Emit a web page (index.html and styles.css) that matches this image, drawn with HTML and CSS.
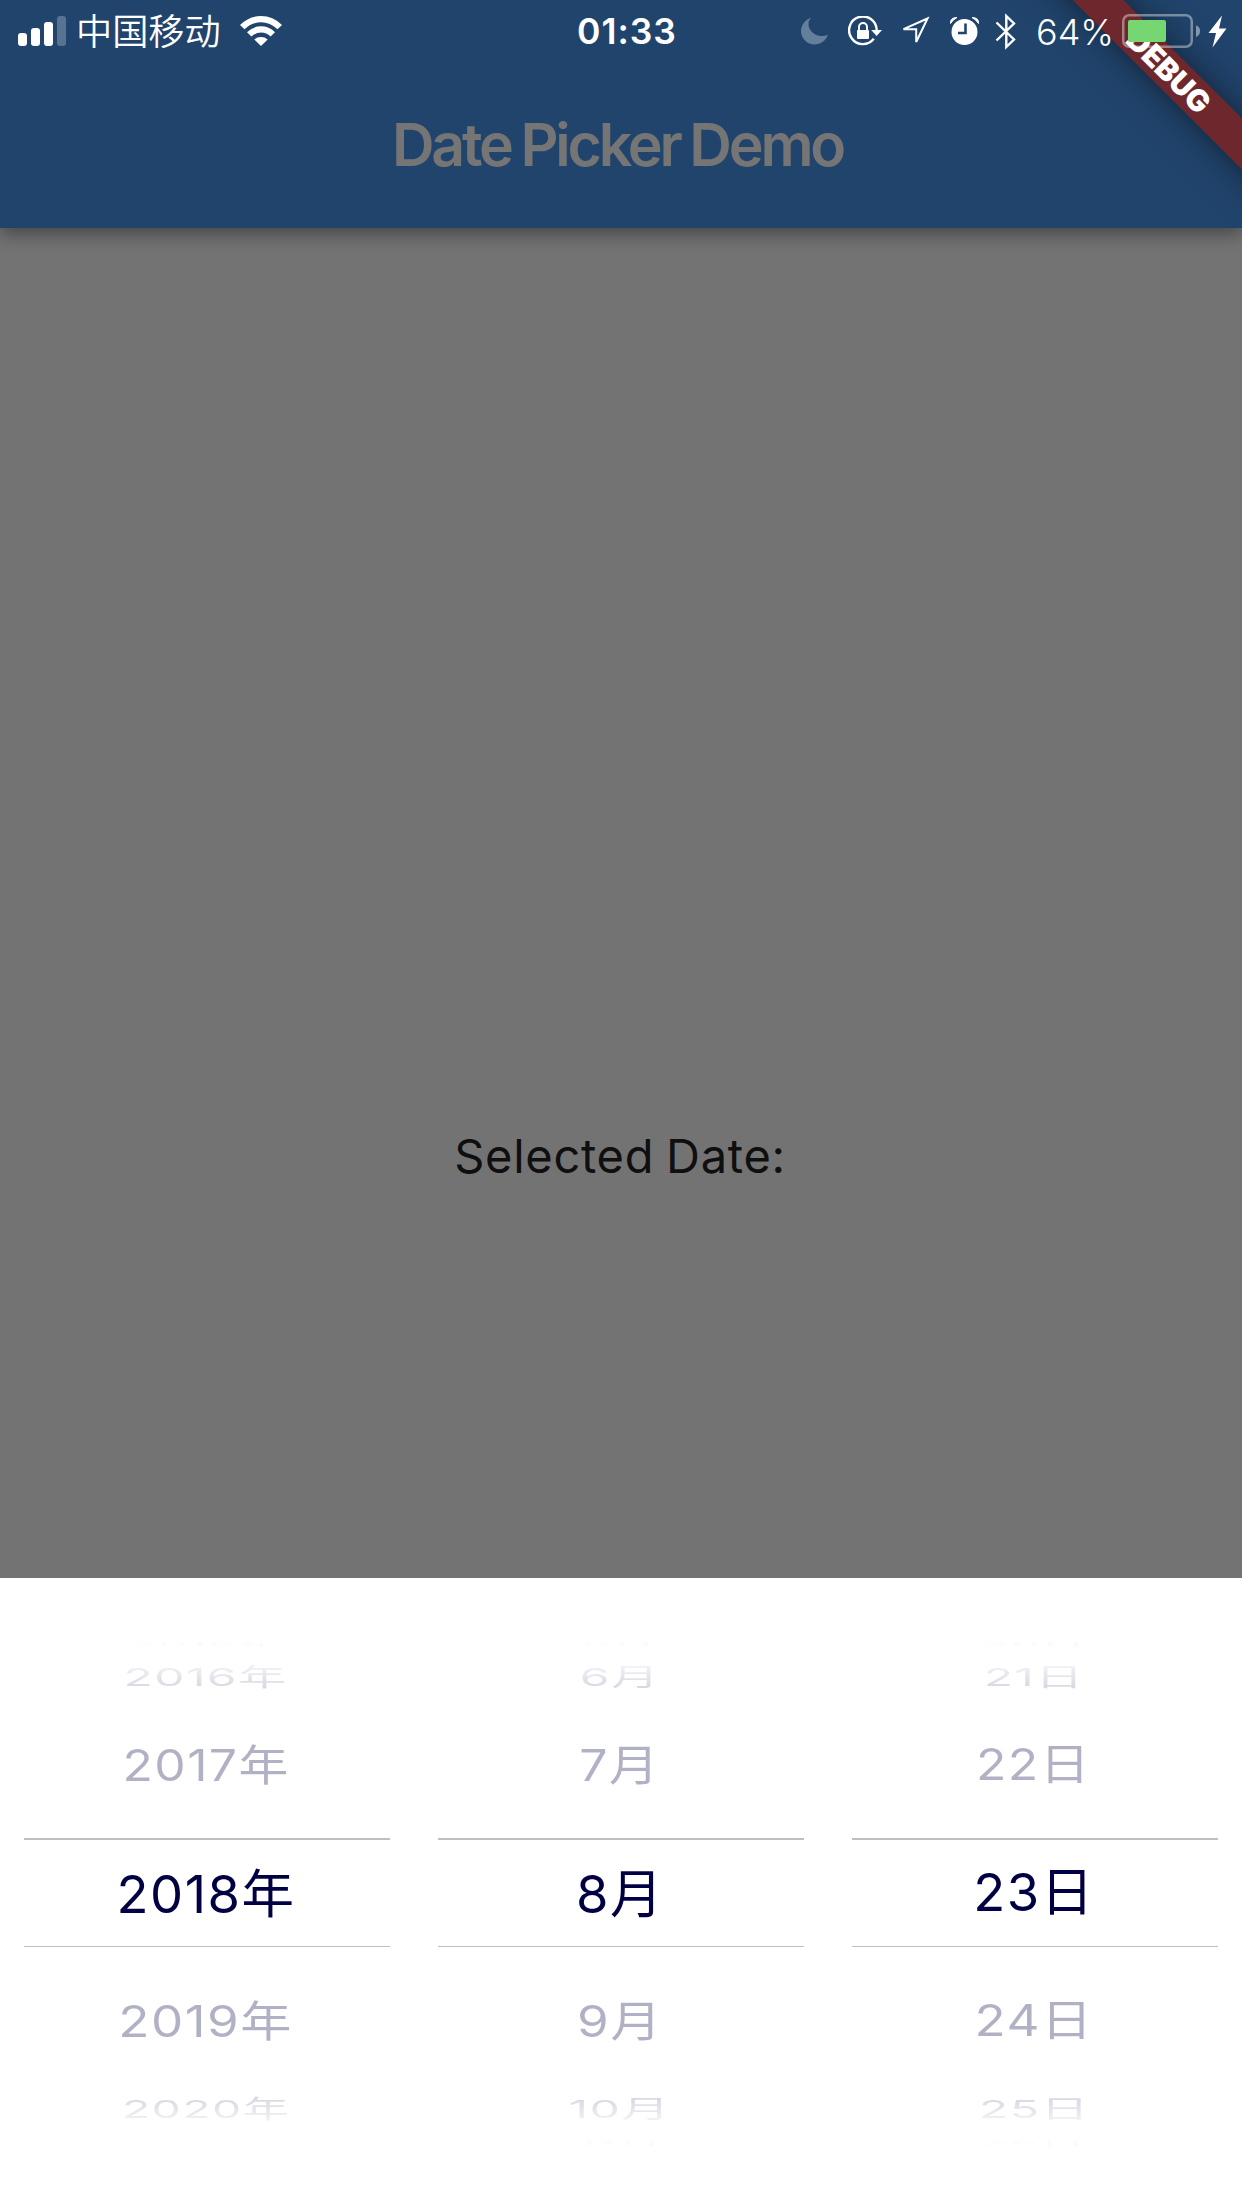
FILE: index.html
```html
<!DOCTYPE html>
<html lang="zh">
<head>
<meta charset="utf-8">
<title>Date Picker Demo</title>
<link rel="stylesheet" href="styles.css">
</head>
<body>
<div class="app">
  <header class="app-bar">
    <div class="status-bar">
      <div class="status-left">
        <svg class="signal" width="48" height="30" viewBox="0 0 48 30" fill="#fff">
          <rect x="0" y="17" width="9" height="13" rx="3"/>
          <rect x="13" y="12" width="9" height="18" rx="3"/>
          <rect x="26" y="6" width="9" height="24" rx="3"/>
          <rect x="39" y="0" width="9" height="30" rx="3" opacity=".25"/>
        </svg>
        <span class="carrier">中国移动</span>
        <svg width="42" height="30" viewBox="0 0 42 30" fill="#fff">
          <path d="M0 9Q9 0 21 0T42 9L37.5 13.3Q30 6.3 21 6.3T4.500 13.300Z"/>
          <path d="M7 16.200Q13 10.300 21 10.300T35 16.200L30.600 20.400Q26.500 16.500 21 16.500T11.400 20.400Z"/>
          <path d="M14.300 23.400Q17 21 21 21T27.700 23.400L21 30Z"/>
        </svg>
      </div>
      <span class="time">01:33</span>
      <div class="status-right">
        <svg class="moon" width="27" height="28" viewBox="0 0 27 28"><path d="M10.500 .5C4.500 2.500 0 8 0 14c0 7.500 6 13.500 13.500 13.500 6 0 11.500-4 13.500-9.800C24.500 18.800 22 19.300 19.500 19 12 18 7 12 7.500 6 7.800 3.500 8.800 2 10.500.5Z" fill="#647f9c"/></svg>
        <svg class="lock" width="34" height="30" viewBox="0 0 34 30" fill="none" stroke="#fff">
          <path d="M25.800 22.800A13.800 13.800 0 1 1 28.700 14" stroke-width="2.400"/>
          <path d="M23.200 14H34l-5.400 6Z" fill="#fff" stroke="none"/>
          <rect x="9" y="14" width="12" height="9" rx="1" fill="#fff" stroke="none"/>
          <path d="M11 15v-4a4 4 0 0 1 8 0v4" stroke-width="2"/>
        </svg>
        <svg class="arrow" width="30" height="31" viewBox="0 0 30 31" fill="none" stroke="#fff" stroke-width="2"><path d="M27.500 2.500L3.500 13.200H16.200V26Z"/></svg>
        <svg class="alarm" width="29" height="29" viewBox="0 0 29 29">
          <circle cx="14.500" cy="15" r="13" fill="#fff"/>
          <path d="M.5 6.500Q0 .5 7 .5Q3 2.500.5 6.500ZM28.500 6.500Q29 .5 22 .5Q26 2.500 28.500 6.500Z" fill="#fff" stroke="#fff"/>
          <path d="M15.500 6.500V16H8" fill="none" stroke="#21446c" stroke-width="2.600"/>
        </svg>
        <svg class="bluetooth" width="22" height="37" viewBox="0 0 22 37" fill="none" stroke="#fff" stroke-width="2.400"><path d="M1.500 9.500L19 26.500 11.300 34V3L19 10.500 1.500 27.500"/></svg>
        <span class="percent">64%</span>
        <svg class="battery" width="78" height="34" viewBox="0 0 78 34">
          <rect x="1.250" y="1.250" width="68.500" height="31.500" rx="6" fill="none" stroke="#fff" stroke-opacity=".4" stroke-width="2.500"/>
          <rect x="6" y="6" width="38" height="22" rx="2" fill="#76d672"/>
          <path d="M74 11.500q4 1 4 5.500t-4 6Z" fill="#fff" fill-opacity=".45"/>
        </svg>
        <svg class="bolt" width="19" height="33" viewBox="0 0 19 33" fill="#fff"><path d="M14 .5L.5 18H8L4.500 32.500 18.500 13.500H11Z"/></svg>
      </div>
    </div>
    <h1 class="title">Date Picker Demo</h1>
    <div class="debug-banner">DEBUG</div>
  </header>
  <main class="content"><p class="selected">Selected Date:</p></main>
  <section class="sheet">
    <div class="column years">
      <div class="row edge"><span>2015年</span></div>
      <div class="row far above"><span>2016年</span></div>
      <div class="row near above"><span>2017年</span></div>
      <div class="row current"><span>2018年</span></div>
      <div class="row near below"><span>2019年</span></div>
      <div class="row far below"><span>2020年</span></div>
    </div>
    <div class="column months">
      <div class="row edge"><span>5月</span></div>
      <div class="row far above"><span>6月</span></div>
      <div class="row near above"><span>7月</span></div>
      <div class="row current"><span>8月</span></div>
      <div class="row near below"><span>9月</span></div>
      <div class="row far below"><span>10月</span></div>
      <div class="row edge last"><span>11月</span></div>
    </div>
    <div class="column days">
      <div class="row edge"><span>20日</span></div>
      <div class="row far above"><span>21日</span></div>
      <div class="row near above"><span>22日</span></div>
      <div class="row current"><span>23日</span></div>
      <div class="row near below"><span>24日</span></div>
      <div class="row far below"><span>25日</span></div>
      <div class="row edge last"><span>26日</span></div>
    </div>
  </section>
</div>
</body>
</html>
```
FILE: styles.css
```css
* { box-sizing: border-box; }
body { margin: 0; font-family: Inter, "Noto Sans CJK SC", sans-serif; }
.app { position: relative; display: flex; flex-direction: column; width: 1242px; height: 2208px; overflow: hidden; background: #737373; }

.app-bar { position: relative; flex: none; height: 228px; background: #21446c; box-shadow: 0 7px 16px rgba(0, 0, 0, .36); }
.status-bar { position: relative; z-index: 2; display: grid; grid-template-columns: 577px 99px 1fr; height: 60px; align-items: center; color: #fff; font-size: 36px; line-height: 60px; white-space: nowrap; }
.status-left { display: flex; align-items: center; padding-left: 18px; }
.carrier { width: 164px; margin: -4px 0 0 10px; font-family: "Noto Sans CJK SC", sans-serif; font-size: 36.200px; font-weight: 350; }
.time { padding-top: 2px; font-weight: 600; font-size: 35.500px; letter-spacing: 1px; }
.status-right { display: flex; align-items: center; padding-left: 125px; height: 60px; }
.status-right svg { flex: none; }
.lock { margin-left: 20px; }
.arrow { margin-left: 18px; }
.alarm { margin-left: 20px; }
.bluetooth { margin-left: 16px; }
.percent { width: 86px; margin-left: 19px; padding-top: 1px; font-size: 36px; font-weight: 350; }
.bolt { margin-left: 8px; }

.title { display: flex; justify-content: center; margin: 0; padding-right: 7px; height: 168px; line-height: 169px; font-size: 59px; font-weight: 560; letter-spacing: -3.200px; word-spacing: -2px; color: #757575; }
.debug-banner { position: absolute; z-index: 1; left: 969px; top: 53px; width: 400px; height: 36px; transform: rotate(45deg); background: #6e282d; box-shadow: 0 0 36px rgba(0, 0, 0, .5); color: #fff; font-size: 30px; font-weight: 900; line-height: 36px; text-align: center; }

.content { display: flex; justify-content: center; height: 1350px; padding-top: 898px; }
.selected { margin: 0; padding-right: 2px; font-size: 47px; line-height: 60px; color: #0f0f0f; letter-spacing: .700px; word-spacing: -2px; }

.sheet { display: grid; grid-template-columns: repeat(3, 1fr); height: 630px; padding-top: 47px; background: #fff; }
.column { padding: 0 24px; color: #000043; font-size: 52.500px; letter-spacing: 1.500px; white-space: nowrap; }
.row { display: flex; align-items: center; justify-content: center; height: 34px; padding-right: 2px; line-height: 60px; }
.row span { flex: none; }
.edge { height: 37px; opacity: .015; }
.edge span { transform: scale(.86, .08); }
.far.above { height: 30px; }
.far.above span { transform: scale(.915, .47); }
.near.above { height: 146px; }
.near span { opacity: .3; }
.near.above span { transform: scale(.95, .83); }
.current { height: 109px; padding-top: 1px; border-top: 2px solid #bfbfbf; border-bottom: 1px solid #bfbfbf; }
.days .current { padding-bottom: 3px; }
.near.below { height: 148px; }
.days .near { padding-bottom: 2px; }
.near.below span { transform: scale(.975, .83); }
.far.below { height: 28px; }
.far.below span { transform: scale(.92, .47); }
.years .far.below span { transform: scale(.885, .47); }
.far span { background: linear-gradient(#f4f4f8, #d4d4e0); background-clip: text; -webkit-background-clip: text; color: transparent; }
.far.below span { background-image: linear-gradient(#d4d4e0, #f4f4f8); }
.last { height: 40px; }
```
